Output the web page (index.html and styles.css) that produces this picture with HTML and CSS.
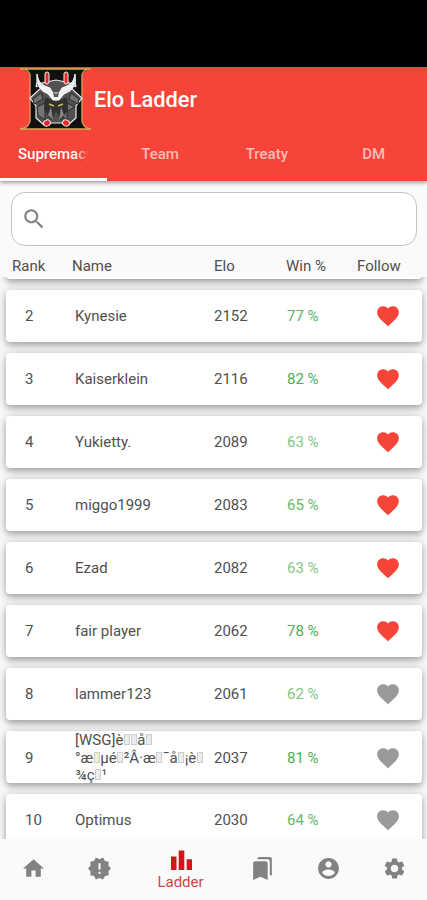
FILE: index.html
```html
<!DOCTYPE html>
<html lang="en">
<head>
  <meta charset="UTF-8">
  <title>Elo Ladder</title>
  <link rel="stylesheet" href="styles.css">
</head>
<body>
  <svg class="sprite">
    <symbol id="heart" viewBox="0 0 24 24">
      <path d="M12 21.35l-1.45-1.32C5.4 15.36 2 12.28 2 8.5 2 5.42 4.42 3 7.5 3c1.74 0 3.41.81 4.5 2.09C13.09 3.81 14.76 3 16.5 3 19.58 3 22 5.42 22 8.5c0 3.78-3.4 6.86-8.55 11.54L12 21.35z"/>
    </symbol>
  </svg>

  <div class="app">
    <div class="status"></div>

    <header class="topbar">
      <div class="brand">
        <svg class="logo" viewBox="0 0 72 62">
          <path d="M3 1H69L64 4 62 9V53L65 59 69 61H3L7 59 10 53V9L8 4Z" fill="#11110f"/>
          <path d="M0 1H71M4 1Q10 3 10 8V53Q9 60 0 61H71Q63 60 62 53V8Q62 3 68 1" fill="none" stroke="#d8a958" stroke-width="1.3"/>
          <path d="M10 30L20 21 22 15 36 12 50 15 52 21 62 30 56 38V50L48 57 42 55H30L24 57 16 50V38Z" fill="#515151" stroke="#e8e8e8" stroke-width="1.2"/>
          <path d="M13 31l8-6 2 6-9 5zM59 31l-8-6-2 6 9 5zM17 39l8-4v17l-7-5zM55 39l-8-4v17l-7-5z" fill="#747474" stroke="#292929"/>
          <path d="M25 29l11 5 11-5 1 12-7 12-5-10-5 10-7-12z" fill="#303030"/>
          <path d="M29 36l5 2M38 38l5-2" stroke="#cabd59" stroke-width="1.5"/>
          <path d="M31 39l2 13-5-5zM41 39l-2 13 5-5z" fill="#858585"/>
          <path d="M17 6Q15 21 28 26L33 32H39L44 26Q58 21 55 6Q54 15 47 18L42 20 39 25H33L30 20 25 18Q18 15 17 6Z" fill="#f2f2f2" stroke="#f2f2f2"/>
          <path d="M18 10l-2 9M22 16l-6 3M54 10l2 9M50 16l6 3" stroke="#ddd" stroke-width="1.3"/>
          <path d="M33 24l3 2 3-2-1 5h-4z" fill="#555"/>
          <g fill="#ef2525" stroke="#eee" stroke-width="1">
            <rect x="25" y="4" width="4" height="12" rx="2"/>
            <rect x="44" y="4" width="4" height="12" rx="2"/>
            <ellipse cx="27" cy="55" rx="3.5" ry="3" transform="rotate(-30 27 55)"/>
            <ellipse cx="46" cy="55" rx="3.5" ry="3" transform="rotate(30 46 55)"/>
          </g>
        </svg>
        <h1>Elo Ladder</h1>
      </div>
      <nav class="tabs">
        <div class="tab active"><span>Supremacy</span></div>
        <div class="tab">Team</div>
        <div class="tab">Treaty</div>
        <div class="tab">DM</div>
      </nav>
    </header>

    <div class="search">
      <svg viewBox="0 0 24 24"><path d="M15.5 14h-.79l-.28-.27C15.41 12.59 16 11.11 16 9.5 16 5.91 13.09 3 9.5 3S3 5.91 3 9.5 5.91 16 9.5 16c1.61 0 3.09-.59 4.23-1.57l.27.28v.79l5 4.99L20.49 19l-4.99-5zm-6 0C7.01 14 5 11.99 5 9.5S7.01 5 9.5 5 14 7.01 14 9.5 11.99 14 9.5 14z"/></svg>
    </div>

    <div class="columns">
      <span>Rank</span><span>Name</span><span>Elo</span><span>Win %</span><span>Follow</span>
    </div>

    <main class="list">
      <div class="card"></div>
      <div class="card">
        <span class="rank">2</span><span class="name">Kynesie</span><span>2152</span><span class="win w3">77 %</span>
        <svg class="heart on"><use href="#heart"/></svg>
      </div>
      <div class="card">
        <span class="rank">3</span><span class="name">Kaiserklein</span><span>2116</span><span class="win w4">82 %</span>
        <svg class="heart on"><use href="#heart"/></svg>
      </div>
      <div class="card">
        <span class="rank">4</span><span class="name">Yukietty.</span><span>2089</span><span class="win w1">63 %</span>
        <svg class="heart on"><use href="#heart"/></svg>
      </div>
      <div class="card">
        <span class="rank">5</span><span class="name">miggo1999</span><span>2083</span><span class="win w2">65 %</span>
        <svg class="heart on"><use href="#heart"/></svg>
      </div>
      <div class="card">
        <span class="rank">6</span><span class="name">Ezad</span><span>2082</span><span class="win w1">63 %</span>
        <svg class="heart on"><use href="#heart"/></svg>
      </div>
      <div class="card">
        <span class="rank">7</span><span class="name">fair player</span><span>2062</span><span class="win w4">78 %</span>
        <svg class="heart on"><use href="#heart"/></svg>
      </div>
      <div class="card">
        <span class="rank">8</span><span class="name">lammer123</span><span>2061</span><span class="win w1">62 %</span>
        <svg class="heart"><use href="#heart"/></svg>
      </div>
      <div class="card">
        <span class="rank">9</span>
        <span class="name long">[WSG]è<i></i><i></i>å<i></i><br>°æ<i></i>µé<i></i>²Â·æ<i></i>¯å<i></i>¡è<i></i><br>¾ç<i></i>¹</span>
        <span>2037</span><span class="win w4">81 %</span>
        <svg class="heart"><use href="#heart"/></svg>
      </div>
      <div class="card">
        <span class="rank">10</span><span class="name">Optimus</span><span>2030</span><span class="win w2">64 %</span>
        <svg class="heart"><use href="#heart"/></svg>
      </div>
    </main>

    <nav class="bottom">
      <div class="item"><svg viewBox="0 0 24 24"><path d="M10 20v-6h4v6h5v-8h3L12 3 2 12h3v8z"/></svg></div>
      <div class="item"><svg viewBox="0 0 24 24"><path d="M23 12l-2.44-2.78.34-3.68-3.61-.82-1.89-3.18L12 3 8.6 1.54 6.71 4.72l-3.61.81.34 3.68L1 12l2.44 2.78-.34 3.69 3.61.82 1.89 3.18L12 21l3.4 1.46 1.89-3.18 3.61-.82-.34-3.68L23 12zm-10 5h-2v-2h2v2zm0-4h-2V7h2v6z"/></svg></div>
      <div class="item current">
        <svg viewBox="0 0 24 24"><path d="M2 8.500h5.500V22H2zM9.700 2.500h5.600V22H9.700zM17.700 11.200h5.300V22h-5.300z"/></svg>
        <span>Ladder</span>
      </div>
      <div class="item"><svg viewBox="0 0 24 24"><path d="M19 18l2 1V3c0-1.100-.9-2-2-2H8.990C7.890 1 7 1.900 7 3h10c1.100 0 2 .9 2 2v13zM15 5H5c-1.100 0-2 .9-2 2v16l7-3 7 3V7c0-1.100-.9-2-2-2z"/></svg></div>
      <div class="item"><svg viewBox="0 0 24 24"><path d="M12 2C6.480 2 2 6.480 2 12s4.480 10 10 10 10-4.480 10-10S17.520 2 12 2zm0 3c1.660 0 3 1.340 3 3s-1.340 3-3 3-3-1.340-3-3 1.340-3 3-3zm0 14.200c-2.500 0-4.710-1.280-6-3.220.03-1.990 4-3.080 6-3.080 1.990 0 5.970 1.090 6 3.080-1.290 1.940-3.500 3.220-6 3.220z"/></svg></div>
      <div class="item"><svg viewBox="0 0 24 24"><path d="M19.140 12.940c.04-.3.060-.61.060-.94 0-.32-.02-.64-.07-.94l2.030-1.580c.18-.14.23-.41.12-.61l-1.920-3.320c-.12-.22-.37-.29-.59-.22l-2.390.96c-.5-.38-1.030-.7-1.620-.94l-.36-2.540c-.04-.24-.24-.41-.48-.41h-3.840c-.24 0-.43.17-.47.41l-.36 2.540c-.59.24-1.130.57-1.620.94l-2.390-.96c-.22-.08-.47 0-.59.22L2.740 8.870c-.12.21-.08.47.12.61l2.030 1.580c-.05.3-.09.63-.09.94s.02.64.07.94l-2.030 1.580c-.18.14-.23.41-.12.61l1.920 3.320c.12.22.37.29.59.22l2.390-.96c.5.38 1.030.7 1.620.94l.36 2.540c.05.24.24.41.48.41h3.840c.24 0 .44-.17.47-.41l.36-2.540c.59-.24 1.130-.56 1.620-.94l2.390.96c.22.08.47 0 .59-.22l1.920-3.320c.12-.22.07-.47-.12-.61l-2.010-1.580zM12 15.600c-1.980 0-3.600-1.620-3.600-3.600s1.620-3.600 3.600-3.600 3.600 1.620 3.600 3.600-1.620 3.600-3.600 3.600z"/></svg></div>
    </nav>
  </div>
</body>
</html>
```

FILE: styles.css
```css
* {
  box-sizing: border-box;
  margin: 0;
  padding: 0;
}

body {
  background: #fafafa;
  color: #505050;
  font-family: Roboto, sans-serif;
  font-size: 15px;
}

.sprite {
  display: none;
}

.app {
  display: flex;
  flex-direction: column;
  height: 900px;
  overflow: hidden;
}

.status {
  height: 67px;
  background: #000;
}

.topbar {
  height: 114px;
  background: #f64438;
  color: #fff;
  box-shadow: 0 2px 4px rgba(0, 0, 0, 0.35);
}

.brand {
  display: flex;
  align-items: center;
  height: 63px;
  padding-left: 20px;
}

.logo {
  width: 72px;
  height: 62px;
}

h1 {
  margin-left: 2px;
  padding-top: 2px;
  font-size: 21.8px;
  font-weight: 500;
}

.tabs {
  display: grid;
  grid-template-columns: repeat(4, minmax(0, 1fr));
  height: 51px;
  font-weight: 500;
  line-height: 48px;
  text-align: center;
}

.tab {
  color: #fbbcb7;
}

.tab.active {
  padding: 0 18px;
  border-bottom: 3px solid #fff;
  color: #fff;
}

.tab.active span {
  display: block;
  overflow: hidden;
  text-align: left;
  mask-image: linear-gradient(to right, #000 80%, transparent);
}

.search {
  display: flex;
  align-items: center;
  height: 54px;
  margin: 11px 10px 0 11px;
  padding: 0 0 1px 9px;
  border: 1px solid #c4c4c4;
  border-radius: 14px;
  background: #fff;
}

.search svg {
  width: 26px;
  height: 26px;
  fill: #858585;
}

.columns {
  display: grid;
  grid-template-columns: 60px 142px 72px 71px auto;
  height: 31px;
  padding-left: 12px;
  line-height: 40px;
}

.list {
  display: flex;
  flex-direction: column;
  gap: 11px;
  height: 562px;
  padding: 0 5px 0 6px;
  overflow: hidden;
}

.card {
  display: grid;
  grid-template-columns: 46px 162px 73px 88px auto;
  align-items: center;
  flex: none;
  height: 52px;
  border-radius: 4px;
  background: #fff;
  box-shadow: 0 3px 5px rgba(0, 0, 0, 0.2), 0 2px 12px rgba(0, 0, 0, 0.24);
}

.card:first-child {
  margin-top: -50px;
}

.rank {
  padding-left: 19px;
}

.name {
  padding-left: 23px;
}

.long {
  padding-top: 1px;
  line-height: 17.5px;
  white-space: nowrap;
}

/* missing glyph box */
.long i {
  display: inline-block;
  width: 6px;
  height: 11px;
  margin: 0 0.5px;
  border: 1px solid #cdcdcd;
  background: #ececec;
}

.win {
  color: #66bb6a;
}

.w1 {
  color: #81c784;
}

.w3 {
  color: #5bb560;
}

.w4 {
  color: #4caf50;
}

.heart {
  width: 26px;
  height: 26px;
  fill: #9a9a9a;
}

.heart.on {
  fill: #f64438;
}

.bottom {
  display: grid;
  grid-template-columns: 66px 66px 97px 66px 66px 66px;
  height: 61px;
  background: #fafafa;
}

.item {
  display: flex;
  flex-direction: column;
  align-items: center;
  justify-content: center;
  padding-bottom: 2px;
}

.item svg {
  width: 25px;
  height: 25px;
  fill: #828282;
}

.item.current {
  padding: 1px 0 0;
  color: #d14545;
  line-height: 20px;
}

.item.current svg {
  width: 24px;
  height: 24px;
  fill: #cf1717;
}
```
